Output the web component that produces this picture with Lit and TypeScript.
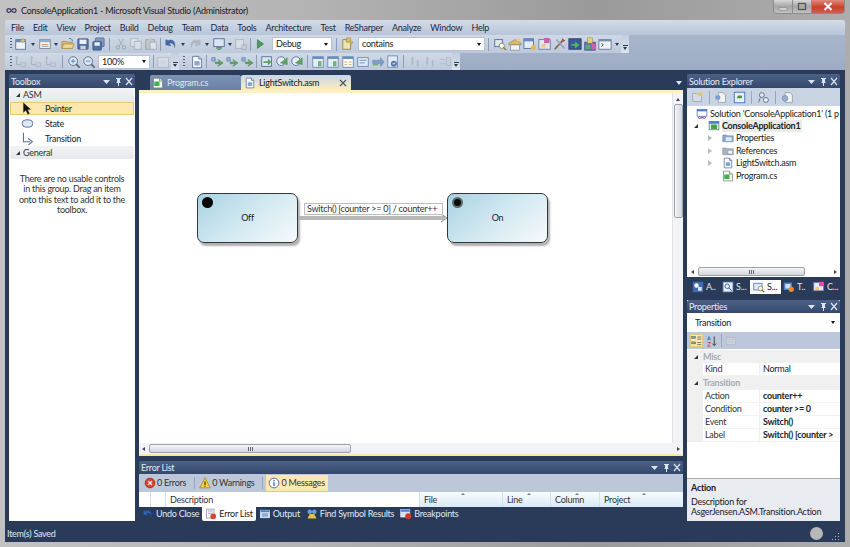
import { LitElement, html, css, svg } from "lit";
import { customElement } from "lit/decorators.js";

const ICONS: Record<string, any> = {
  newp: svg`<rect x="2" y="3" width="11" height="11" fill="#f4f7fb" stroke="#4a6a9c"/><rect x="2" y="3" width="11" height="3" fill="#5a86c4"/><path d="M10 1l1 2 2 1-2 1-1 2-1-2-2-1 2-1z" fill="#f6c93c" stroke="#b58a1a" stroke-width=".4"/>`,
  item: svg`<rect x="2" y="3" width="12" height="10" fill="#fdfdf4" stroke="#6c7a8e"/><rect x="2" y="3" width="12" height="3" fill="#8fa8cc"/><rect x="4" y="8" width="8" height="1" fill="#d89a2c"/><rect x="4" y="10" width="8" height="1" fill="#5a86c4"/>`,
  open: svg`<path d="M1 5h5l1 1h6v7H1z" fill="#e8b548" stroke="#a5771c" stroke-width=".7"/><path d="M3 8h12l-2 5H1z" fill="#f8d978" stroke="#a5771c" stroke-width=".7"/><path d="M9 2c2-1 4 0 4 3" fill="none" stroke="#3a64a8"/>`,
  save: svg`<rect x="2" y="2" width="12" height="12" rx="1" fill="#3f6ab4" stroke="#24447e" stroke-width=".7"/><rect x="4" y="3" width="8" height="5" fill="#f0f4fa"/><rect x="5" y="10" width="6" height="4" fill="#c6d2e4"/>`,
  saveall: svg`<rect x="5" y="1" width="10" height="10" rx="1" fill="#7a97c9" stroke="#24447e" stroke-width=".7"/><rect x="2" y="5" width="10" height="10" rx="1" fill="#3f6ab4" stroke="#24447e" stroke-width=".7"/><rect x="4" y="6" width="6" height="4" fill="#f0f4fa"/>`,
  cut: svg`<path d="M5 2l5 8M11 2L6 10" stroke="#7c8796" stroke-width="1.2" fill="none"/><circle cx="4.5" cy="12" r="2" fill="none" stroke="#55606e"/><circle cx="11.5" cy="12" r="2" fill="none" stroke="#55606e"/>`,
  copy: svg`<rect x="2" y="2" width="8" height="9" fill="#fff" stroke="#7c8796"/><rect x="6" y="5" width="8" height="9" fill="#eef2f7" stroke="#7c8796"/>`,
  paste: svg`<rect x="2" y="3" width="10" height="11" fill="#d9b36a" stroke="#7c6a44"/><rect x="5" y="1.5" width="4" height="3" fill="#aab2bd"/><rect x="7" y="6" width="7" height="8" fill="#fff" stroke="#7c8796"/>`,
  undo: svg`<path d="M5 4C9 2 14 5 12 12C12 8 9 6 6 7L8 10L2 9L2 3z" fill="#2f62b8" stroke="#1d3f80" stroke-width=".4"/>`,
  redo: svg`<path d="M11 4C7 2 2 5 4 12C4 8 7 6 10 7L8 10L14 9L14 3z" fill="#8a98ac" stroke="#6c7a8e" stroke-width=".4"/>`,
  nav: svg`<rect x="2" y="2" width="12" height="9" fill="#dbe7f6" stroke="#3a64a8"/><rect x="5" y="11" width="6" height="2" fill="#6c7a8e"/><path d="M4 13l4 2 4-2" fill="#3fa03f"/>`,
  next: svg`<rect x="2" y="3" width="9" height="10" fill="#eef2f7" stroke="#7c8796"/><path d="M9 9h5v5H9z" fill="#c6d2e4" stroke="#7c8796"/>`,
  play: svg`<path d="M5 3l7 5-7 5z" fill="#2fa03a" stroke="#1b6e24" stroke-width=".7"/>`,
  sol: svg`<path d="M2 3h7l2 3v8H2z" fill="#f2e6a8" stroke="#8e7a2c"/><path d="M6 1h5v4l3 1-3 2-1-2H6z" fill="#f0b73a" stroke="#8e6a14" stroke-width=".5"/>`,
  tb1: svg`<rect x="2" y="3" width="9" height="8" fill="#dfeaf8" stroke="#3a64a8"/><circle cx="10" cy="10" r="3" fill="#fff" stroke="#8e7a2c"/><path d="M12 12l3 3" stroke="#8e6a14" stroke-width="1.5"/>`,
  tb2: svg`<path d="M1 7l7-4 7 4v2H1z" fill="#e8b548" stroke="#8e6a14" stroke-width=".6"/><rect x="3" y="9" width="10" height="6" fill="#f7f7ef" stroke="#6c7a8e" stroke-width=".7"/><rect x="10" y="1" width="4" height="4" fill="#f2d058"/>`,
  tb3: svg`<rect x="1" y="2" width="11" height="11" fill="#e8f0fb" stroke="#3a64a8"/><rect x="1" y="2" width="11" height="3" fill="#5a86c4"/><circle cx="12" cy="12" r="3" fill="#f0b73a"/>`,
  tb4: svg`<rect x="1" y="3" width="13" height="11" fill="#e4e9f6" stroke="#5a6fa8"/><rect x="7" y="1" width="6" height="6" fill="#e04fb0"/><rect x="4" y="8" width="5" height="4" fill="#f2d058"/>`,
  tool: svg`<path d="M2 14L11 4" stroke="#8a5a2c" stroke-width="2"/><path d="M4 3l9 10" stroke="#9aa4b2" stroke-width="2"/><path d="M10 1l4 3-3 2z" fill="#c8352c"/>`,
  exec: svg`<rect x="1" y="2" width="14" height="12" fill="#2c4f9a" stroke="#1c3470"/><path d="M4 8h4V5l5 4-5 4v-3H4z" fill="#2fc03a"/>`,
  mul: svg`<rect x="2" y="6" width="12" height="9" fill="#4f73c4" stroke="#2c4f9a"/><rect x="5" y="1" width="6" height="6" fill="#f2d058" stroke="#8e6a14" stroke-width=".5"/><rect x="10" y="8" width="5" height="6" fill="#e04fb0"/><rect x="3" y="9" width="5" height="5" fill="#49b04a"/>`,
  cmd: svg`<rect x="1" y="3" width="14" height="11" fill="#f3f6fb" stroke="#5a6f94"/><rect x="1" y="3" width="14" height="2" fill="#6d88b8"/><path d="M4 7l2 2-2 2" fill="none" stroke="#222"/>`,
  g1: svg`<path d="M3 2v9h5" fill="none" stroke="#6c7a8e"/><circle cx="3" cy="3" r="1.5" fill="#8a98ac"/><rect x="8" y="9" width="5" height="4" fill="none" stroke="#8a98ac"/>`,
  zin: svg`<circle cx="7" cy="7" r="5" fill="#dfeaf8" stroke="#4d617f"/><path d="M4.5 7h5M7 4.5v5" stroke="#2f7ac0"/><path d="M10.5 10.5l4 4" stroke="#4d617f" stroke-width="2"/>`,
  zout: svg`<circle cx="7" cy="7" r="5" fill="#dfeaf8" stroke="#4d617f"/><path d="M4.5 7h5" stroke="#2f7ac0"/><path d="M10.5 10.5l4 4" stroke="#4d617f" stroke-width="2"/>`,
  view: svg`<rect x="1" y="3" width="12" height="11" fill="#eef1f5" stroke="#8a98ac"/><rect x="4" y="6" width="6" height="5" fill="#d4dae2"/>`,
  page: svg`<path d="M3 1.5h7l3 3v10H3z" fill="#fff" stroke="#4f6c9c"/><rect x="5" y="7" width="6" height="5" fill="#7ea6dc"/><path d="M10 1.5v3h3" fill="#cddcf0" stroke="#4f6c9c"/>`,
  wf1: svg`<path d="M2 3h4v4H2z" fill="#8fb0de" stroke="#3a64a8" stroke-width=".6"/><path d="M6 8l5 0-2-3 6 4-6 4 2-3H6z" fill="#43a843" stroke="#2a7a2a" stroke-width=".5"/>`,
  bp1: svg`<rect x="2" y="2" width="11" height="11" fill="#dfeaf8" stroke="#3a64a8"/><path d="M4 7h5V4l4 4-4 4V9H4z" fill="#43a843"/>`,
  bp2: svg`<circle cx="7" cy="7" r="5" fill="#e8f0fb" stroke="#3a64a8"/><path d="M6 9l8-6v8z" fill="#43a843" stroke="#2a7a2a" stroke-width=".4"/>`,
  win1: svg`<rect x="2" y="2" width="12" height="12" fill="#e8f0fb" stroke="#5a86c4"/><rect x="2" y="2" width="12" height="2.5" fill="#5a86c4"/><path d="M8 7h4v6H8z" fill="#5db85d"/>`,
  win2: svg`<rect x="2" y="2" width="12" height="12" fill="#fff" stroke="#5a86c4"/><rect x="2" y="2" width="12" height="2.5" fill="#5a86c4"/><path d="M4 8h3M9 8h3M4 11h3M9 11h3" stroke="#d49a30"/>`,
  win3: svg`<rect x="2" y="3" width="12" height="10" fill="#e4edf9" stroke="#5a86c4"/><path d="M4 6h8M4 9h6" stroke="#5a86c4"/>`,
  win4: svg`<path d="M2 6h9V3l4 5-4 5v-3H2z" fill="#6f9ad6" stroke="#4a76b8" stroke-width=".5"/><path d="M2 11h6" stroke="#5db85d" stroke-width="2"/>`,
  win5: svg`<rect x="2" y="1" width="11" height="13" fill="#e4edf9" stroke="#5a86c4"/><circle cx="9" cy="10" r="3.5" fill="#4a76b8"/><path d="M7.5 10h3" stroke="#fff"/>`,
  dis1: svg`<path d="M4 2h2v9H4zM10 6h2v7h-2z" fill="#8e99a8"/>`,
  dis2: svg`<path d="M2 5h7M2 10h7" stroke="#8e99a8"/><rect x="10" y="3" width="4" height="9" fill="none" stroke="#8e99a8"/>`,
  cs: svg`<path d="M2 1.5h8l4 4v9H2z" fill="#fff" stroke="#6c8a6c"/><path d="M3 6h7v6H3z" fill="#3fb04a"/><path d="M10 1.5v4h4" fill="#dff0d8" stroke="#6c8a6c"/>`,
  pointer: svg`<path d="M3 1v12l3-3 2.4 5 2-1-2.3-4.8H12z" fill="#111" stroke="#333" stroke-width=".4"/>`,
  state: svg`<rect x="1.5" y="3.5" width="13" height="9" rx="4.5" fill="#dbe9fa" stroke="#44608c"/>`,
  trans: svg`<path d="M3 1v11h8" fill="none" stroke="#5a6f94" stroke-width="1.3"/><path d="M9 8l5 4-5 4" fill="none" stroke="#5a6f94" stroke-width="1.3"/>`,
  solution: svg`<rect x="1.5" y="2" width="13" height="9" fill="#fff" stroke="#4a6a9c"/><rect x="1.5" y="2" width="13" height="2.5" fill="#4a80cc"/><path d="M3 13c2-3 3 0 5 0s3-3 5 0c-2 2-3 0-5 0s-3 2-5 0z" fill="none" stroke="#7a4aa8" stroke-width="1.2"/>`,
  project: svg`<rect x="1.5" y="2" width="13" height="11" fill="#eaf3e6" stroke="#4f6c9c"/><rect x="1.5" y="2" width="13" height="3" fill="#4a80cc"/><rect x="4" y="6" width="8" height="6" fill="#43a843"/>`,
  props: svg`<path d="M1 4h5l1 1h8v8H1z" fill="#8aa7d4" stroke="#5a7298" stroke-width=".6"/><rect x="5" y="7" width="8" height="5" fill="#dfeaf8"/>`,
  refs: svg`<path d="M1 4h5l1 1h8v8H1z" fill="#a9b4c2" stroke="#6d7786" stroke-width=".6"/><rect x="8" y="7" width="6" height="5" fill="#f4f6f9" stroke="#6d7786" stroke-width=".5"/>`,
  sefolder: svg`<path d="M2 3h5l1 1h5v9H2z" fill="#d8dce2" stroke="#9aa4b2"/><path d="M9 2h5v4H9z" fill="#e8c46a"/>`,
  sedoc: svg`<path d="M4 2h6l3 3v9H4z" fill="#f5f5f0" stroke="#8a98ac"/><path d="M1 6h5v4H1z" fill="#7ea6dc" stroke="#4f6c9c" stroke-width=".5"/>`,
  serefresh: svg`<rect x="1.5" y="1.5" width="13" height="13" fill="#e8f0fb" stroke="#2f66b8"/><path d="M5 8a3 3 0 0 1 5-2l1-1v4H7l1-1a2 2 0 0 0-2 2z" fill="#2fa03a"/>`,
  sefind: svg`<circle cx="6" cy="5" r="3" fill="#dfeaf8" stroke="#4d617f"/><circle cx="11" cy="11" r="3" fill="#eef1f5" stroke="#4d617f"/><path d="M4 8l-2 6" stroke="#4d617f"/>`,
  sesite: svg`<path d="M5 2h6l3 3v9H5z" fill="#f5f5f0" stroke="#8a98ac"/><circle cx="5" cy="9" r="3.5" fill="#9ab0d0" stroke="#4f6c9c" stroke-width=".5"/>`,
  te: svg`<rect x="1" y="1" width="14" height="14" fill="#3f6ab4"/><circle cx="6" cy="6" r="3" fill="#fff"/><rect x="8" y="8" width="5" height="5" fill="#dfeaf8"/>`,
  obj: svg`<rect x="1.5" y="1.5" width="13" height="13" fill="#eaf0fa" stroke="#7f93b5"/><circle cx="7" cy="7" r="3" fill="none" stroke="#2f66b8" stroke-width="1.3"/><path d="M9 9l4 4" stroke="#2f66b8" stroke-width="1.4"/>`,
  ses: svg`<rect x="1" y="3" width="11" height="9" fill="#dfeaf8" stroke="#4a6a9c"/><circle cx="10" cy="10" r="3" fill="#fff" stroke="#8e7a2c"/><path d="M12 12l3 3" stroke="#8e6a14" stroke-width="1.5"/>`,
  team: svg`<rect x="1" y="2" width="11" height="10" fill="#4a80cc"/><rect x="3" y="4" width="7" height="6" fill="#cfe0f5"/><circle cx="11" cy="11" r="3.5" fill="#f08a2c"/>`,
  cls: svg`<rect x="1" y="2" width="13" height="11" fill="#e6eaf8" stroke="#6a7ab0"/><rect x="8" y="1" width="6" height="6" fill="#e04fb0"/><rect x="3" y="8" width="5" height="4" fill="#f2d058"/>`,
  cat: svg`<rect x="1" y="2" width="6" height="3" fill="#8a98ac" stroke="#444" stroke-width=".5"/><rect x="1" y="10" width="6" height="3" fill="#8a98ac" stroke="#444" stroke-width=".5"/><path d="M9 3h6M9 6h6M9 11h6M9 14h6" stroke="#444"/>`,
  az: svg`<path d="M2 7l2-5 2 5M2.8 5.5h2.4" fill="none" stroke="#2f66b8"/><path d="M2 10h4l-4 5h4" fill="none" stroke="#c8352c"/><path d="M11 2v12M8.5 11.5L11 14l2.5-2.5" fill="none" stroke="#333" stroke-width="1.2"/>`,
  pages: svg`<rect x="2" y="3" width="12" height="10" fill="#d8dee8" stroke="#9aa4b2"/><path d="M4 6h8M4 9h8" stroke="#aeb6c2"/>`,
  err: svg`<circle cx="8" cy="8" r="6.5" fill="#d8452c" stroke="#8e2a1a"/><path d="M5.5 5.5l5 5M10.5 5.5l-5 5" stroke="#fff" stroke-width="1.8"/>`,
  warn: svg`<path d="M8 1l7 13.5H1z" fill="#f5cf3c" stroke="#a5811c"/><path d="M8 6v4.5M8 11.5v1.5" stroke="#222" stroke-width="1.4"/>`,
  info: svg`<circle cx="8" cy="8" r="6.5" fill="#fff" stroke="#3a64a8" stroke-width="1.2"/><path d="M8 7v5M8 4v1.6" stroke="#2f66b8" stroke-width="1.8"/>`,
  errlist: svg`<rect x="2" y="1.5" width="10" height="12" fill="#f4f6fa" stroke="#8a98ac"/><path d="M4 4h6M4 7h6" stroke="#8a98ac"/><circle cx="11" cy="11" r="3.8" fill="#d8452c"/>`,
  output: svg`<rect x="2" y="3" width="12" height="10" fill="#cfe0f5" stroke="#e4ecf6"/><rect x="2" y="3" width="12" height="2.5" fill="#4a80cc"/><path d="M4 8h8M4 10.5h8" stroke="#2f66b8"/>`,
  findsym: svg`<circle cx="5" cy="5" r="3" fill="#6d9be0"/><circle cx="11" cy="5" r="3" fill="#6d9be0"/><path d="M2 14l3-6h6l3 6z" fill="#e8c33a"/>`,
  bp: svg`<rect x="1" y="2" width="12" height="10" fill="#d8e4f6" stroke="#eef2f8"/><rect x="1" y="2" width="12" height="3" fill="#4a80cc"/><circle cx="11" cy="11" r="4" fill="#d8352c"/>`,
};

const ic = (name: string, cls = "") => html`<svg class="ic ${cls}" viewBox="0 0 16 16" aria-hidden="true">${ICONS[name]}</svg>`;

const MENU = ["File", "Edit", "View", "Project", "Build", "Debug", "Team", "Data", "Tools", "Architecture", "Test", "ReSharper", "Analyze", "Window", "Help"];

const TB1 = ["g5", "newp", "v9", "item", "v8", "open", "save", "saveall", "|8", "~cut", "~copy", "~paste", "|5", "undo", "v9", "~redo", "v9", "nav", "v7", "~next", "|4", "play", "c5:60:Debug", "|8", "sol", "c3:127:contains", "|7",
  "tb1", "tb2", "tb3", "tb4", "tool", "exec", "mul", "cmd", "v9", "o"];
const TB2 = ["g5", "~g1", "~g1", "~g1", "|8", "zin", "zout", "c2:52:100%", "|6", "~view", "o", "g10", "page", "|5", "wf1", "wf1", "wf1", "|5", "bp1", "bp2", "bp2", "|6",
  "win1", "win1", "win2", "win3", "win4", "win5", "|7", "~dis1", "~dis1", "~dis2", "o"];

const TOOL_ITEMS: [string, string, boolean][] = [["pointer", "Pointer", true], ["state", "State", false], ["trans", "Transition", false]];

const TREE: [number, string, string, string, boolean][] = [
  [0, "", "solution", "Solution 'ConsoleApplication1' (1 p", false],
  [1, "open", "project", "ConsoleApplication1", true],
  [2, "closed", "props", "Properties", false],
  [2, "closed", "refs", "References", false],
  [2, "closed", "page", "LightSwitch.asm", false],
  [2, "", "cs", "Program.cs", false],
];

const PROPS: [string, [string, string, boolean][]][] = [
  ["Misc", [["Kind", "Normal", false]]],
  ["Transition", [["Action", "counter++", true], ["Condition", "counter >= 0", true], ["Event", "Switch()", true], ["Label", "Switch() [counter >", true]]],
];

const SE_TABS: [string, string, boolean][] = [["te", "A..", false], ["obj", "S...", false], ["ses", "S...", true], ["team", "T..", false], ["cls", "C...", false]];
const COLS: [string, string][] = [["", "gut1"], ["", "gut2"], ["Description", "desc"], ["File", "file"], ["Line", "line"], ["Column", "column"], ["Project", "project"]];
const BOTTOM: [string, string, boolean][] = [["undo", "Undo Close", false], ["errlist", "Error List", true], ["output", "Output", false], ["findsym", "Find Symbol Results", false], ["bp", "Breakpoints", false]];

@customElement("app-root")
export class AppRoot extends LitElement {
  static styles = css`
    :host { display: block; width: 850px; height: 547px; overflow: hidden; }
    * { box-sizing: border-box; }
    .window { width: 850px; height: 547px; display: flex; flex-direction: column; padding: 0 5px 5px;
      font: 9px/12px Lato, "Open Sans", sans-serif; letter-spacing: -.25px; color: #222;
      background: linear-gradient(90deg, #c2c2c2 0%, #b4b4b4 35%, #9a9a9a 70%, #adadad 100%); }
    .ic { width: 14px; height: 14px; flex: none; display: block; }
    .ic.off { opacity: .42; filter: grayscale(.8); }
    .cell .ic:not(.off) { filter: saturate(.8); opacity: .92; }

    .title { height: 20px; flex: none; display: flex; align-items: center; gap: 4px; color: #1a1a1a; padding: 1px 0 0 1px; position: relative; }
    .logo { width: 11px; height: 7px; flex: none; }
    .wc { margin-left: auto; align-self: flex-start; display: flex; height: 14px; margin-top: -1px; border: 1px solid #8c8c8c; border-top: 0; border-radius: 0 0 4px 4px; overflow: hidden; }
    .wc div { display: flex; align-items: center; justify-content: center; background: linear-gradient(#d8d8d8, #a6a6a6 50%, #c2c2c2); border-right: 1px solid #8c8c8c; }
    .wc .mn { width: 19px; } .wc .mx { width: 19px; }
    .wc .cl { width: 32px; background: linear-gradient(#e08a7c, #c8402c 55%, #d0604c); border: 0; }
    .wc svg { width: 10px; height: 9px; display: block; }

    .menu { height: 15px; flex: none; display: flex; align-items: center; gap: 9px; padding-left: 6px; background: linear-gradient(#d2dbe8, #b8c5d8); border-radius: 2px 2px 0 0; color: #1d2a3c; }
    .bands { height: 35px; flex: none; background: linear-gradient(#a8b6cc, #9dacc4); display: flex; flex-direction: column; }
    .tb { height: 18px; display: flex; align-items: center; padding-left: 3px; align-self: flex-start; background: linear-gradient(#d0d9e6, #bdc9db); }
    .tb + .tb { height: 17px; }
    .cell { width: 15px; height: 15px; display: flex; align-items: center; justify-content: center; flex: none; }
    .arrow, .grip, .sep { height: 15px; display: flex; justify-content: center; align-items: center; flex: none; }
    .arrow::after { content: ""; border: 2px solid transparent; border-top: 3px solid #2c3a50; border-bottom: 0; }
    .grip::after { content: ""; width: 2px; height: 12px; background: repeating-linear-gradient(#55647c 0 1px, transparent 1px 3px); }
    .sep::after { content: ""; width: 1px; height: 13px; background: #8d9cb4; }
    .over { width: 8px; height: 100%; flex: none; display: flex; flex-direction: column; align-items: center; justify-content: flex-end; gap: 1px; padding-bottom: 3px; background: linear-gradient(#c3cedf, #dbe2ec); }
    .over::before { content: ""; width: 5px; height: 1px; background: #2c3a50; }
    .over::after { content: ""; border: 2.5px solid transparent; border-top: 3px solid #2c3a50; border-bottom: 0; }
    .combo { height: 14px; flex: none; display: flex; align-items: center; justify-content: space-between; padding: 0 3px 0 3px; background: #fff; border: 1px solid #b6c2d4; color: #222; }
    .combo::after, .dd::after { content: ""; border: 2.5px solid transparent; border-top: 3px solid #111; border-bottom: 0; }

    .work { flex: 1; min-height: 0; background: #293b58; display: flex; flex-direction: column; padding: 4px 5px 0 4px; }
    .grid { display: grid; grid-template-columns: 126px 544px 153px; gap: 4px; height: 447px; flex: none; }
    .status { flex: 1; display: flex; align-items: center; color: #e4e9f1; padding: 4px 0 0 0; margin-left: -2px; }
    .dot { width: 13px; height: 13px; border-radius: 50%; background: #b8b8b8; margin-left: auto; margin-right: 8px; }
    .resize { width: 8px; height: 8px; margin-right: 1px; margin-top: 5px; background: radial-gradient(circle, #aab6c8 0 .8px, transparent 1px) 0 0/3px 3px; clip-path: polygon(100% 0, 100% 100%, 0 100%); }

    .col { display: flex; flex-direction: column; min-width: 0; min-height: 0; }
    .ph { height: 14px; flex: none; display: flex; align-items: center; color: #e6ebf3; padding: 1px 2px 0 2px; background: linear-gradient(#4c6187, #34486c); border-radius: 2px 2px 0 0; }
    .ph.ep, .ph.pp { padding-top: 0; }
    .ctl { margin-left: auto; width: 30px; height: 9px; flex: none; display: block; }

    .toolbox { flex: 1; background: #fff; padding: 0 1px 0 1px; }
    .tsec { height: 14px; display: flex; align-items: center; background: linear-gradient(#f2f3f5, #e7e9ec); padding-left: 6px; gap: 3px; color: #333; }
    .tri { width: 0; height: 0; flex: none; border-style: solid; border-width: 0 0 4.5px 4.5px; border-color: transparent transparent #333 transparent; }
    .titem { height: 13px; margin: 0 0 2px; display: flex; align-items: center; padding-left: 10px; border: 1px solid transparent; color: #222; }
    .titem .ic { width: 13px; height: 13px; }
    .titem span { margin-left: 11px; }
    .titem.sel { background: #fee8ae; border-color: #e8c778; }
    .titem + .tsec { margin-top: -1px; height: 13px; }
    .empty { text-align: center; line-height: 10.4px; padding: 15px 8px 0; color: #333; }

    .tabs { height: 16px; flex: none; display: flex; align-items: flex-end; padding-left: 11px; }
    .tab { height: 15px; display: flex; align-items: center; gap: 3px; padding: 0 0 0 2px; border-radius: 2px 2px 0 0; background: linear-gradient(#7d92b4, #6a80a6); color: #dfe6f0; width: 91px; }
    .tab .ic { width: 12px; height: 12px; }
    .tab.on { background: linear-gradient(#c6d6ec, #ffedb8); color: #1a1a1a; width: 110px; padding-left: 3px; }
    .tab .x { margin-left: auto; margin-right: 4px; width: 8px; height: 8px; }
    .tabs .menuarrow { margin-left: auto; margin-right: 1px; margin-bottom: 5px; border: 3px solid transparent; border-top: 4px solid #dfe6f0; border-bottom: 0; }
    .doc { height: 366px; flex: none; display: flex; flex-direction: column; background: #fff; border-top: 3px solid #fff0bf; border-bottom: 2px solid #fde6a4; }
    .docmain { flex: 1; min-height: 0; display: flex; }
    .canvas { flex: 1; position: relative; background: #fff; overflow: hidden; }
    .node { position: absolute; top: 100px; width: 101px; height: 50px; border: 1px solid #30383c; border-radius: 7px; box-shadow: 2px 3px 2px #b0b0b0; background: linear-gradient(140deg, #a8d3e3 0%, #d2e9f1 50%, #f6fafc 100%); display: flex; align-items: center; justify-content: center; color: #222; }
    .node.off { left: 58px; } .node.on { left: 308px; }
    .mark { position: absolute; left: 4px; top: 3px; width: 11px; height: 11px; border-radius: 50%; background: #050505; }
    .on .mark { background: #0a0a0a; border: 2px solid #5e6a70; }
    .link { position: absolute; left: 159px; top: 118px; width: 150px; height: 12px; }
    .lbl { position: absolute; left: 165px; top: 110px; width: 139px; height: 12px; background: #fff; border: 1px solid #bdbdbd; padding-left: 2px; line-height: 10px; color: #333; white-space: nowrap; }
    .vs { width: 11px; flex: none; background: #f1f3f6; border-left: 1px solid #e0e3e8; display: flex; flex-direction: column; align-items: center; padding-top: 5px; }
    .vs i { border: 2.5px solid transparent; border-bottom: 3px solid #444; border-top: 0; }
    .vs b { width: 9px; height: 114px; margin-top: 3px; border: 1px solid #9aa3ae; border-radius: 2px; background: linear-gradient(90deg, #f4f5f7, #d2d6dc); }
    .hs { height: 11px; flex: none; display: flex; align-items: center; background: #f1f3f6; padding-left: 3px; }
    .hs i { flex: none; border: 2.5px solid transparent; border-right: 3px solid #444; border-left: 0; }
    .hs b { height: 9px; flex: none; margin-left: 4px; border: 1px solid #9aa3ae; border-radius: 2px; background: linear-gradient(#f4f5f7, #d2d6dc); display: flex; align-items: center; justify-content: center; }
    .hs b::after { content: ""; width: 5px; height: 4px; background: repeating-linear-gradient(90deg, #666 0 1px, transparent 1px 2px); }
    .hs u { flex: none; margin-left: auto; margin-right: 3px; border: 2.5px solid transparent; border-left: 3px solid #444; border-right: 0; }
    .hs.d b { width: 202px; }
    .hs.s b { width: 107px; }
    .hs.s { background: #fff; padding-left: 4px; margin-bottom: 3px; }

    .errs { margin-top: 5px; height: 46px; flex: none; display: flex; flex-direction: column; }
    .ph.ep { height: 13px; }
    .ebar { height: 18px; flex: none; display: flex; align-items: center; background: #bcc8da; padding-left: 4px; color: #333; }
    .ebtn { height: 16px; display: flex; align-items: center; gap: 1px; padding: 0 3px 0 1px; }
    .ebtn.on { background: #fde9b0; padding: 0 3px 0 2px; }
    .ebtn .ic { width: 12px; height: 12px; }
    .esep { width: 1px; height: 12px; background: #97a5ba; margin: 0 3px 0 5px; }
    .ecols { height: 15px; flex: none; display: flex; background: linear-gradient(#f8fcff, #d9e9f6); color: #333; }
    .ecol { height: 100%; display: flex; align-items: flex-end; padding: 0 0 1px 4px; border-right: 1px solid #cfe0ee; position: relative; flex: none; }
    .gut1 { width: 12px; background: #fff; } .gut2 { width: 15px; background: #fff; }
    .desc { width: 254px; background: #fff; } .file { width: 83px; } .line { width: 48px; } .column { width: 49px; } .project { width: 83px; border-right: 0; }
    .ecol.srt::after { content: ""; position: absolute; left: 50%; top: 1px; border: 2px solid transparent; border-bottom: 2px solid #6f7f92; border-top: 0; }
    .btabs { height: 14px; flex: none; display: flex; align-items: center; color: #e3e8f0; }
    .btab { height: 14px; display: flex; align-items: center; gap: 2px; padding: 0 3px; }
    .btab.on { background: #fff; color: #222; border-radius: 0 0 2px 2px; }
    .btab .ic { width: 12px; height: 12px; }

    .panel { height: 221px; flex: none; display: flex; flex-direction: column; background: #293b58; }
    .sebar { height: 18px; flex: none; display: flex; align-items: center; gap: 5px; padding-left: 4px; background: #c9d4e3; }
    .sebar .ic { width: 13px; height: 13px; }
    .vsep { width: 1px; height: 13px; background: #98a7bc; flex: none; }
    .tree { flex: 1; min-height: 0; padding-top: 1.5px; background: #fff; overflow: hidden; }
    .trow { height: 12.4px; display: flex; align-items: center; white-space: nowrap; color: #222; }
    .tw { width: 6px; flex: none; display: flex; justify-content: center; }
    .tw.closed::after { content: ""; border: 3px solid transparent; border-left: 4px solid #b4bcc8; border-right: 0; }
    .tw.open::after { content: ""; border-style: solid; border-width: 0 0 4.5px 4.5px; border-color: transparent transparent #333 transparent; }
    .trow .ic { width: 12px; height: 12px; margin: 0 2px 0 3px; }
    .trow.b .txt { font-weight: 700; background: #eaeaea; padding-right: 2px; }
    .l0 { padding-left: 6px; } .l1 { padding-left: 6px; } .l2 { padding-left: 20px; }
    .l0 .tw { width: 0; } .l1 .tw { margin-right: 6px; } .l2 .tw { margin-right: 6px; }
    .setabs { height: 15px; flex: none; background: #293b58; display: flex; align-items: flex-start; color: #e3e8f0; padding-left: 3px; }
    .setab { height: 14px; width: 30px; flex: none; display: flex; align-items: center; gap: 2px; padding-left: 2px; }
    .setab.on { background: #fff; color: #222; padding-left: 3px; width: 31px; }
    .setab .ic { width: 12px; height: 12px; }
    .props { margin-top: 5px; flex: 1; min-height: 0; display: flex; flex-direction: column; background: #fff; }
    .ph.pp { height: 13px; }
    .dd { height: 19px; flex: none; display: flex; align-items: center; justify-content: space-between; padding: 0 5px 0 8px; background: #fff; color: #222; }
    .pbar { height: 17px; flex: none; display: flex; align-items: center; gap: 3px; background: #bcc8da; padding-left: 3px; }
    .pbar .ic { width: 12px; height: 12px; }
    .pbtn { width: 13px; height: 13px; flex: none; background: #fde9b0; border: 1px solid #e3c677; display: flex; align-items: center; justify-content: center; }
    .pbtn .ic { width: 11px; height: 11px; }
    .pgrid { flex: 1; min-height: 0; padding-top: 1px; overflow: hidden; }
    .psec { height: 13.2px; background: #f0f0f0; display: flex; align-items: center; gap: 5px; padding-left: 7px; color: #a6acb6; font-weight: 700; }
    .prow { height: 13.2px; display: grid; grid-template-columns: 57px 1fr; margin-left: 16px; background: #fff; white-space: nowrap; color: #333; align-items: center; border-bottom: 1px solid #f2f2f2; }
    .pwrap { background: #f0f0f0; }
    .prow .n { padding-left: 2px; height: 100%; display: flex; align-items: center; border-right: 1px solid #f0f0f0; }
    .prow .v { padding-left: 3px; color: #222; }
    .prow .v.b { font-weight: 700; }
    .pinfo { height: 43px; flex: none; background: #e8ebf0; border-top: 1px solid #aab0b8; padding: 4px 0 0 4px; color: #222; line-height: 10.5px; }
    .pinfo strong { display: block; margin-bottom: 3px; }
  `;

  private tool(list: string[]) {
    return html`<div class="tb">${list.map((x) => {
      const c = x[0];
      if (x === "o") return html`<div class="over"></div>`;
      if (c === "g") return html`<div class="grip" style="width:${+x.slice(1)}px"></div>`;
      if (c === "v") return html`<div class="arrow" style="width:${+x.slice(1)}px"></div>`;
      if (c === "|") return html`<div class="sep" style="width:${+x.slice(1)}px"></div>`;
      if (c === "c" && x.includes(":")) {
        const [m, w, t] = x.slice(1).split(":");
        return html`<div class="combo" style="margin-left:${+m}px;width:${+w}px">${t}</div>`;
      }
      if (c === "~") return html`<div class="cell">${ic(x.slice(1), "off")}</div>`;
      return html`<div class="cell">${ic(x)}</div>`;
    })}</div>`;
  }

  private ctl() {
    return html`<svg class="ctl" viewBox="0 0 30 9" aria-hidden="true">
      <path d="M0 3h7L3.5 7z" fill="#dbe3ee"/>
      <path d="M13 1h5v1h-1v3l1 1h-2v3h-1V6h-2l1-1V2h-1z" fill="#dbe3ee"/>
      <path d="M23 1l6 7M29 1l-6 7" stroke="#dbe3ee" stroke-width="1.2"/>
    </svg>`;
  }

  private treeRow(r: [number, string, string, string, boolean]) {
    const [lvl, tw, icon, text, bold] = r;
    return html`<div class="trow l${lvl} ${bold ? "b" : ""}"><span class="tw ${tw}"></span>${ic(icon)}<span class="txt">${text}</span></div>`;
  }

  render() {
    return html`<div class="window">
      <div class="title">
        <svg class="logo" viewBox="0 0 11 7" aria-hidden="true"><path d="M1 3.5C1 1 4 1 5.5 3.5S10 6 10 3.5 7 1 5.5 3.5 1 6 1 3.5z" fill="none" stroke="#3a3560" stroke-width="1.3"/></svg>
        <span>ConsoleApplication1 - Microsoft Visual Studio (Administrator)</span>
        <div class="wc">
          <div class="mn"><svg viewBox="0 0 10 9"><rect x="1" y="6" width="8" height="2" fill="#f4f4f4" stroke="#666" stroke-width=".5"/></svg></div>
          <div class="mx"><svg viewBox="0 0 10 9"><rect x="1.5" y="1.5" width="7" height="6" fill="none" stroke="#555" stroke-width="1.3"/></svg></div>
          <div class="cl"><svg viewBox="0 0 10 9"><path d="M1.5 1l7 7M8.5 1l-7 7" stroke="#fff" stroke-width="2"/></svg></div>
        </div>
      </div>
      <div class="menu">${MENU.map((m) => html`<span>${m}</span>`)}</div>
      <div class="bands">${this.tool(TB1)}${this.tool(TB2)}</div>
      <div class="work">
        <div class="grid">
          <div class="col">
            <div class="ph"><span>Toolbox</span>${this.ctl()}</div>
            <div class="toolbox">
              <div class="tsec"><span class="tri"></span>ASM</div>
              ${TOOL_ITEMS.map(([i, t, s]) => html`<div class="titem ${s ? "sel" : ""}">${ic(i)}<span>${t}</span></div>`)}
              <div class="tsec"><span class="tri"></span>General</div>
              <div class="empty">There are no usable controls in this group. Drag an item onto this text to add it to the toolbox.</div>
            </div>
          </div>
          <div class="col">
            <div class="tabs">
              <div class="tab">${ic("cs")}<span>Program.cs</span></div>
              <div class="tab on">${ic("page")}<span>LightSwitch.asm</span>
                <svg class="x" viewBox="0 0 8 8" aria-hidden="true"><path d="M1 1l6 6M7 1L1 7" stroke="#4a5568" stroke-width="1.2"/></svg></div>
              <span class="menuarrow"></span>
            </div>
            <div class="doc">
              <div class="docmain">
                <div class="canvas">
                  <svg class="link" viewBox="0 0 150 12" aria-hidden="true">
                    <rect x="0" y="5" width="147" height="4" fill="#b9b9b9"/>
                    <path d="M143 3l6 4-6 4" fill="none" stroke="#8a8a8a"/>
                  </svg>
                  <div class="node off"><span class="mark"></span>Off</div>
                  <div class="node on"><span class="mark"></span>On</div>
                  <div class="lbl">Switch() [counter &gt;= 0] / counter++</div>
                </div>
                <div class="vs"><i></i><b></b></div>
              </div>
              <div class="hs d"><i></i><b></b><u></u></div>
            </div>
            <div class="errs">
              <div class="ph ep"><span>Error List</span>${this.ctl()}</div>
              <div class="ebar">
                <div class="ebtn">${ic("err")}<span>0 Errors</span></div><span class="esep"></span>
                <div class="ebtn">${ic("warn")}<span>0 Warnings</span></div><span class="esep"></span>
                <div class="ebtn on">${ic("info")}<span>0 Messages</span></div>
              </div>
              <div class="ecols">${COLS.map(([t, c]) => html`<div class="ecol ${c} ${["file", "line", "column", "project"].includes(c) ? "srt" : ""}">${t}</div>`)}</div>
            </div>
            <div class="btabs">${BOTTOM.map(([i, t, s]) => html`<div class="btab ${s ? "on" : ""}">${ic(i)}<span>${t}</span></div>`)}</div>
          </div>
          <div class="col">
            <div class="panel">
              <div class="ph"><span>Solution Explorer</span>${this.ctl()}</div>
              <div class="sebar">
                ${ic("sefolder")}<span class="vsep"></span>${ic("sedoc")}${ic("serefresh")}<span class="vsep"></span>${ic("sefind")}<span class="vsep"></span>${ic("sesite")}
              </div>
              <div class="tree">${TREE.map((r) => this.treeRow(r))}</div>
              <div class="hs s"><i></i><b></b><u></u></div>
              <div class="setabs">${SE_TABS.map(([i, t, s]) => html`<div class="setab ${s ? "on" : ""}">${ic(i)}<span>${t}</span></div>`)}</div>
            </div>
            <div class="props">
              <div class="ph pp"><span>Properties</span>${this.ctl()}</div>
              <div class="dd">Transition</div>
              <div class="pbar"><div class="pbtn">${ic("cat")}</div>${ic("az")}<span class="vsep"></span>${ic("pages", "off")}</div>
              <div class="pgrid">
                ${PROPS.map(([sec, rows]) => html`
                  <div class="psec"><span class="tri"></span>${sec}</div>
                  <div class="pwrap">${rows.map(([n, v, b]) => html`<div class="prow"><span class="n">${n}</span><span class="v ${b ? "b" : ""}">${v}</span></div>`)}</div>`)}
              </div>
              <div class="pinfo"><strong>Action</strong>Description for<br />AsgerJensen.ASM.Transition.Action</div>
            </div>
          </div>
        </div>
        <div class="status"><span>Item(s) Saved</span><span class="dot"></span><span class="resize"></span></div>
      </div>
    </div>`;
  }
}
